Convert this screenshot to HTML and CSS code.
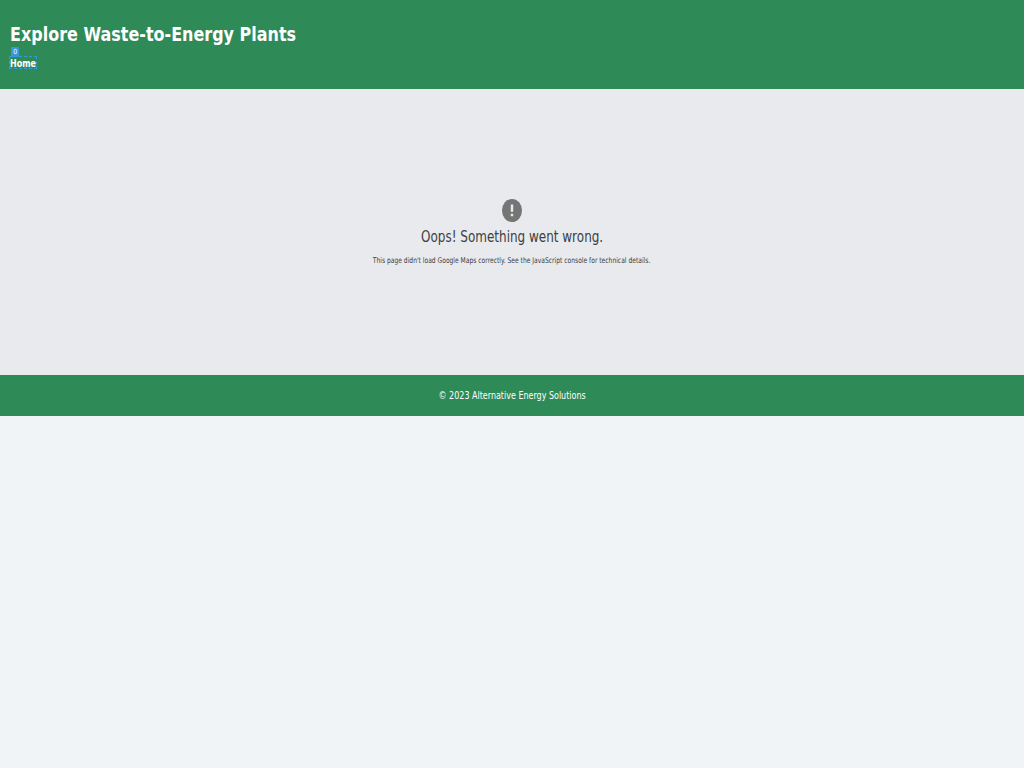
FILE: index.html
```html
<!DOCTYPE html>
<html lang="en">
<head>
<meta charset="utf-8">
<title>Explore Waste-to-Energy Plants</title>
<link rel="stylesheet" href="styles.css">
</head>
<body>
<header class="header">
  <h1 class="title"><span class="narrow">Explore Waste-to-Energy Plants</span></h1>
  <nav class="nav"><a class="link" href="#"><span class="narrow">Home</span><span class="badge"><span class="digit">0</span></span></a></nav>
</header>
<main class="map">
  <svg class="icon" viewBox="0 0 20 23" width="20" height="23"><ellipse cx="10" cy="11.5" rx="10" ry="11.5" fill="#757575"/><path d="M8.8 5.5h2.4v7.3H8.8zM8.8 14.8h2.4v2.5H8.8z" fill="#e8eaed"/></svg>
  <div class="oops"><span class="narrow">Oops! Something went wrong.</span></div>
  <div class="detail"><span class="narrow">This page didn't load Google Maps correctly. See the JavaScript console for technical details.</span></div>
</main>
<footer class="footer"><span class="narrow">© 2023 Alternative Energy Solutions</span></footer>
</body>
</html>
```
FILE: styles.css
```css
body {
  margin: 0;
  background: #f0f4f7;
  font: 9.8px/11px "DejaVu Sans", sans-serif;
}
.narrow {
  display: inline-block;
  transform: scaleX(0.816);
}
.header {
  box-sizing: border-box;
  height: 89px;
  padding: 24px 10px 0;
  background: #2e8b57;
  color: #fff;
}
.header .narrow {
  transform-origin: 0 50%;
}
.title {
  margin: 0;
  font-size: 18.8px;
  line-height: 21px;
}
.title .narrow {
  transform: scaleX(0.851);
}
.nav {
  margin-top: 12px;
}
.link {
  position: relative;
  display: block;
  width: 26px;
  height: 11px;
  color: #fff;
  font-weight: bold;
  line-height: 12px;
  text-decoration: none;
  outline: 1px dashed #3498db;
}
.link .narrow {
  padding-top: 0.6px;
}
.badge {
  position: absolute;
  left: 1px;
  top: -10px;
  width: 8px;
  height: 10px;
  background: #3498db;
  border-radius: 1px;
  font-size: 7.2px;
  font-weight: normal;
  line-height: 10px;
  text-align: center;
}
.digit {
  display: inline-block;
  transform: scaleX(0.85);
}
.map {
  box-sizing: border-box;
  height: 286px;
  padding-top: 110px;
  background: #e8eaed;
  color: #3c4043;
  text-align: center;
}
.icon {
  display: block;
  margin: 0 auto;
}
.oops {
  margin-top: 7px;
  font-size: 15.3px;
  line-height: 16px;
}
.oops .narrow {
  transform: scaleX(0.784);
}
.detail {
  margin-top: 11px;
  font-size: 7.9px;
  line-height: 9px;
}
.detail .narrow {
  transform: scaleX(0.76);
}
.footer {
  height: 40.5px;
  background: #2e8b57;
  color: #fff;
  line-height: 41px;
  text-align: center;
}
```
